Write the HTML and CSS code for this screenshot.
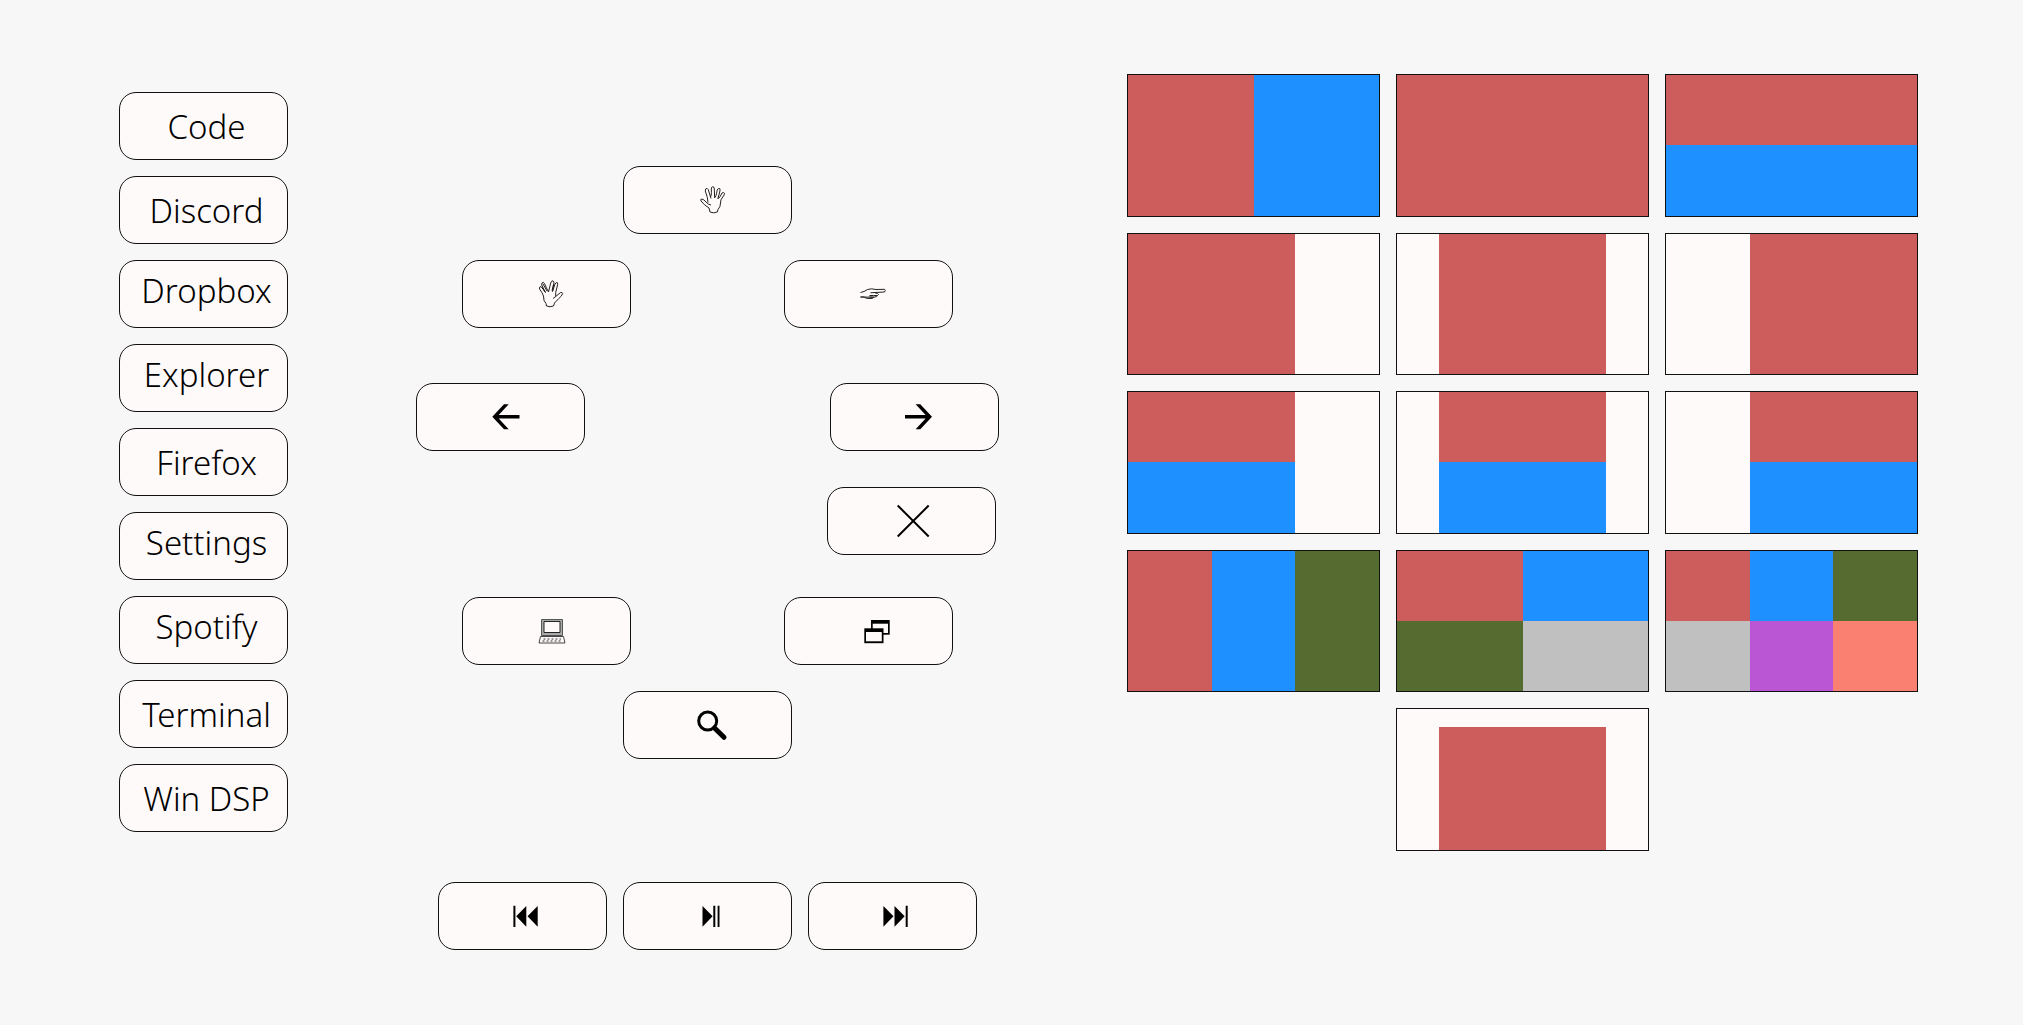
FILE: index.html
```html
<!DOCTYPE html>
<html lang="en">
<head>
<meta charset="utf-8">
<meta name="viewport" content="width=device-width, initial-scale=1">
<title>Desktop launcher</title>
<link rel="stylesheet" href="styles.css">
</head>
<body>
<main class="board">
  <nav class="apps" aria-label="Applications">
    <button class="key" type="button">Code</button>
    <button class="key" type="button">Discord</button>
    <button class="key key-descender" type="button">Dropbox</button>
    <button class="key key-descender" type="button">Explorer</button>
    <button class="key" type="button">Firefox</button>
    <button class="key key-descender" type="button">Settings</button>
    <button class="key key-descender" type="button">Spotify</button>
    <button class="key" type="button">Terminal</button>
    <button class="key" type="button">Win DSP</button>
  </nav>

  <section class="controls" aria-label="Controls">
    <div class="row">
      <button class="key" type="button" aria-label="Open hand">
        <svg class="icon outline" viewBox="0 0 36 36"><path d="M16 30L15 26Q10 23 7 19Q6 17 8 17Q10 17.500 12 20Q14 22.500 17 23M14 20.500Q14 16 11.300 9Q11 6.500 13 6.300Q14.500 7 15 10L17 16.500M16 15Q17.800 15 17.300 7Q17.300 4.700 18.800 4.700Q20.300 4.700 20.300 7L20.700 16M20.700 15.500Q22 15.500 23.200 8Q24 6 25.700 6.500Q26.500 7.500 25.700 10L23.800 17M24 16.500Q26 16 28 11Q29.500 9.700 30.500 11.300Q30.500 13 28.800 15Q26.300 17.500 26.500 21Q26.500 25 24 27.500L23.300 30Q20 31.700 16 30"/></svg>
      </button>
    </div>
    <div class="row row-pair row-near">
      <button class="key" type="button" aria-label="Parted fingers">
        <svg class="icon outline" viewBox="0 0 36 36"><path d="M13.500 30L13 27.500Q10.300 25 10.500 20Q9 16 6.500 13Q6 10.500 8 10.500Q10 12 12 16M12.500 16.500L8.700 9Q8.500 6.300 10.300 6.300Q11.800 7.300 13 11L15.500 16L17.700 7Q18.300 4.600 20 4.800Q21.500 5.500 20.800 8L19.500 15.500L22 8Q23 5.800 24.500 6.800Q25 8 24.300 10L22.700 16.500V20.500L27.500 16.600Q29.500 16 29.700 17.500Q29 20 25.500 22.800L21.500 27L20.500 30Q17 31.500 13.500 30M20 22.500L22.700 20.500M8.500 11L12.500 16.500M20.500 8.500L19 14.500M10 8L14 15"/></svg>
      </button>
      <button class="key" type="button" aria-label="Pointing hand">
        <svg class="icon outline" viewBox="0 0 36 36"><path d="M5.500 16.500L9 15.500Q12 13 16.500 12.800L21 13.500L29.500 13.300Q31 14.500 29.500 16L20 16.500L15.500 16.800M20 16.800L22.500 17.500Q24.500 18.500 22.500 19.500H18.500M22.500 19.500Q22.700 21 18.500 21.200L14.500 21M19 21.200Q18 23 14 22.500Q10.500 22.500 9 21L5.500 21ZM14.500 19.500L18.500 19.500"/></svg>
      </button>
    </div>
    <div class="row row-edges">
      <button class="key" type="button" aria-label="Left">
        <svg class="icon" viewBox="0 0 36 36"><path d="M5.300 17.800L17 5.300H21.700L11.700 16H32.500V19.500H11.700L21.700 30.300H17Z"/></svg>
      </button>
      <button class="key" type="button" aria-label="Right">
        <svg class="icon" viewBox="0 0 36 36"><path d="M31 17.800L19.300 5.300H14.600L24.600 16H4V19.500H24.600L14.600 30.300H19.300Z"/></svg>
      </button>
    </div>
    <div class="row row-close">
      <button class="key" type="button" aria-label="Close">
        <svg class="icon" viewBox="0 0 36 36"><path class="cross" d="M-.300 2.500L30.700 33.500M30.700 2.500L-.300 33.500"/></svg>
      </button>
    </div>
    <div class="row row-pair row-lower">
      <button class="key" type="button" aria-label="Computer">
        <svg class="icon" viewBox="0 0 36 36"><path class="bezel" d="M8.500 6.500H29.500V22.500H8.500Z"/><path class="glass" d="M11 8.500H27V19.500H11Z"/><path class="base" d="M7.500 23.500H30.500L32 30H6Z"/><path class="dots" d="M10.500 26H28M9.500 28H29.500"/></svg>
      </button>
      <button class="key" type="button" aria-label="Windows">
        <svg class="icon" viewBox="0 0 36 36"><path d="M16 7H34.700V21.700H16Z"/><path class="pane" d="M17.700 10.700H33V20H17.700Z"/><path d="M9.300 15.300H28.500V30.200H9.300Z"/><path class="pane" d="M11 19H26.800V28.300H11Z"/></svg>
      </button>
    </div>
    <div class="row row-near">
      <button class="key" type="button" aria-label="Search">
        <svg class="icon" viewBox="0 0 36 36"><circle class="lens" cx="13.700" cy="14" r="9"/><path class="handle" d="M20.500 21L30 30.300"/></svg>
      </button>
    </div>
    <div class="row row-media">
      <button class="key" type="button" aria-label="Previous track">
        <svg class="icon" viewBox="0 0 36 36"><path d="M4.400 7.700H6.400V29H4.400ZM7.200 18.300L17.300 8V28.700ZM18.500 18.300L28.700 8V28.700Z"/></svg>
      </button>
      <button class="key" type="button" aria-label="Play or pause">
        <svg class="icon" viewBox="0 0 36 36"><path d="M8.500 8L18.600 18.300L8.500 28.700ZM19.300 7.700H21.300V29H19.300ZM23.600 7.700H25.500V29H23.600Z"/></svg>
      </button>
      <button class="key" type="button" aria-label="Next track">
        <svg class="icon" viewBox="0 0 36 36"><path d="M4.400 8L14.500 18.300L4.400 28.700ZM15.500 8L25.700 18.300L15.500 28.700ZM26.700 7.700H28.700V29H26.700Z"/></svg>
      </button>
    </div>
  </section>

  <section class="layouts" aria-label="Window layouts">
    <button class="layout split-2" type="button" aria-label="Halves"><span class="red"></span><span class="blue"></span></button>
    <button class="layout" type="button" aria-label="Full screen"><span class="red"></span></button>
    <button class="layout rows-2" type="button" aria-label="Stacked halves"><span class="red"></span><span class="blue"></span></button>

    <button class="layout at-left" type="button" aria-label="Left two thirds"><span class="red"></span></button>
    <button class="layout at-center" type="button" aria-label="Center two thirds"><span class="red"></span></button>
    <button class="layout at-right" type="button" aria-label="Right two thirds"><span class="red"></span></button>

    <button class="layout at-left rows-2" type="button" aria-label="Left stack"><span class="red"></span><span class="blue"></span></button>
    <button class="layout at-center rows-2" type="button" aria-label="Center stack"><span class="red"></span><span class="blue"></span></button>
    <button class="layout at-right rows-2" type="button" aria-label="Right stack"><span class="red"></span><span class="blue"></span></button>

    <button class="layout split-3" type="button" aria-label="Thirds"><span class="red"></span><span class="blue"></span><span class="green"></span></button>
    <button class="layout split-2 rows-2" type="button" aria-label="Quarters"><span class="red"></span><span class="blue"></span><span class="green"></span><span class="gray"></span></button>
    <button class="layout split-3 rows-2" type="button" aria-label="Sixths"><span class="red"></span><span class="blue"></span><span class="green"></span><span class="gray"></span><span class="purple"></span><span class="salmon"></span></button>

    <button class="layout at-center lowered" type="button" aria-label="Center, below the top edge"><span class="red"></span></button>
  </section>
</main>
</body>
</html>
```
FILE: styles.css
```css
* {
  box-sizing: border-box;
}

body {
  margin: 0;
  background: #f7f7f7;
  color: #000;
  font-family: "Noto Sans", "Open Sans", sans-serif;
}

.board {
  display: grid;
  grid-template-columns: 169px 583px minmax(0, 1fr);
  column-gap: 128px;
  align-items: start;
  padding: 74px 105px 74px 119px;
}

.apps {
  display: flex;
  flex-direction: column;
  gap: 16px;
  padding-top: 18px;
}

.key {
  display: flex;
  align-items: center;
  justify-content: center;
  width: 169px;
  height: 68px;
  padding: 2px 0 0 6px;
  border: 1px solid #111;
  border-radius: 17px;
  background: #fffafa;
  color: inherit;
  font: 300 33px/40px "Noto Sans", "Open Sans", sans-serif;
  white-space: nowrap;
}

.key-descender {
  padding-top: 0;
  padding-bottom: 6px;
}

.controls {
  padding-top: 92px;
}

.controls .key {
  padding: 0 0 0 8px;
}

.row {
  display: flex;
  justify-content: center;
}

.row-pair {
  gap: 153px;
}

.row-near {
  margin-top: 26px;
}

.row-edges {
  justify-content: space-between;
  margin-top: 55px;
}

.row-close {
  justify-content: flex-end;
  margin-top: 36px;
  padding-right: 3px;
}

.row-lower {
  margin-top: 42px;
}

.row-media {
  gap: 16px;
  margin-top: 123px;
}

.icon {
  width: 36px;
  height: 36px;
  overflow: visible;
  fill: #000;
}

.outline {
  fill: none;
  stroke: #222;
  stroke-width: 1;
  stroke-linejoin: round;
}

.cross {
  fill: none;
  stroke: #000;
  stroke-width: 2;
}

.bezel {
  fill: #aaa;
  stroke: #555;
}

.glass {
  fill: #fffafa;
  stroke: #222;
}

.base {
  fill: #fffafa;
  stroke: #444;
}

.dots {
  fill: none;
  stroke: #333;
  stroke-dasharray: 2 2;
}

.pane {
  fill: #fffafa;
}

.lens {
  fill: none;
  stroke: #000;
  stroke-width: 3;
}

.handle {
  stroke: #000;
  stroke-width: 5;
  stroke-linecap: round;
}

.layouts {
  display: grid;
  grid-template-columns: repeat(3, 1fr);
  grid-template-rows: repeat(5, 1fr);
  gap: 16px;
  aspect-ratio: 791 / 777;
}

.layout {
  display: grid;
  padding: 0;
  border: 1px solid #111;
  background: #fffafa;
}

.split-2 {
  grid-template-columns: repeat(2, 1fr);
}

.split-3 {
  grid-template-columns: repeat(3, 1fr);
}

.rows-2 {
  grid-template-rows: repeat(2, 1fr);
}

.at-left {
  grid-template-columns: 2fr 1fr;
}

.at-left span {
  grid-column: 1;
}

.at-center {
  grid-template-columns: 1fr 4fr 1fr;
}

.at-center span {
  grid-column: 2;
}

.at-right {
  grid-template-columns: 1fr 2fr;
}

.at-right span {
  grid-column: 2;
}

.lowered {
  grid-template-rows: 1fr 7fr;
  grid-column: 2;
}

.lowered span {
  grid-row: 2;
}

.red {
  background: #cd5c5c;
}

.blue {
  background: #1e90ff;
}

.green {
  background: #556b2f;
}

.gray {
  background: #c0c0c0;
}

.purple {
  background: #ba55d3;
}

.salmon {
  background: #fa8072;
}
```
